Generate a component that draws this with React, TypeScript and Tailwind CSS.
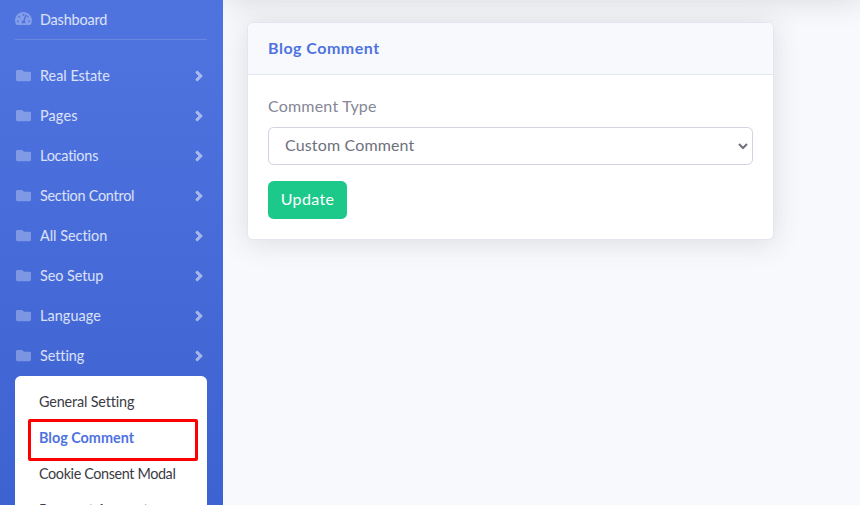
import { FaAngleRight, FaFolder, FaTachometerAlt } from "react-icons/fa";

const sections = [
  { label: "Real Estate", tracking: "tracking-[0px]" },
  { label: "Pages", tracking: "tracking-[0.15px]" },
  { label: "Locations", tracking: "tracking-[-0.2px]" },
  { label: "Section Control", tracking: "tracking-[-0.25px]" },
  { label: "All Section", tracking: "tracking-[0px]" },
  { label: "Seo Setup", tracking: "tracking-[-0.05px]" },
  { label: "Language", tracking: "tracking-[0.1px]" },
  { label: "Setting", tracking: "tracking-[-0.05px]" },
];

function Sidebar() {
  return (
    <aside className="h-full w-[223px] shrink-0 overflow-hidden bg-linear-to-b from-[#4e73df] from-10% to-[#3d62d1] pr-4 pl-[15px] text-[14.4px] text-white/80">
      <a className="flex h-[39px] items-center">
        <FaTachometerAlt className="mb-0.5 h-[15px] w-[17px] text-white/30" />
        <span className="ml-2 tracking-[-0.15px]">Dashboard</span>
      </a>
      <hr className="mb-4 border-white/15" />
      <nav>
        {sections.map((s) => (
          <a key={s.label} className="flex h-10 items-center">
            <span className="mb-px flex w-[17px] justify-center">
              <FaFolder className="size-[15px] text-white/30" />
            </span>
            <span className={`ml-2 ${s.tracking}`}>{s.label}</span>
            <FaAngleRight className="ml-auto size-4 stroke-white/50 stroke-[18px] text-white/50" />
          </a>
        ))}
      </nav>
      <div className="h-[180px] rounded-[5.6px] bg-white px-2 pt-2 text-[#3a3b45]">
        <a className="flex h-9 items-center px-4 tracking-[-0.16px]">General Setting</a>
        <a className="relative flex h-9 items-center px-4 font-bold text-[#4e73df]">
          Blog Comment
          <span className="absolute -top-px left-[5px] h-[42px] w-[170px] rounded-xs border-3 border-[#fe0000]" />
        </a>
        <a className="flex h-9 items-center px-4 tracking-[-0.38px]">Cookie Consent Modal</a>
        <a className="flex h-9 items-center px-4 tracking-[-0.1px]">Payment Account</a>
      </div>
    </aside>
  );
}

export default function App() {
  return (
    <div className="flex h-[505px] w-[860px] overflow-hidden bg-[#f8f9fc] font-['Lato','Noto_Sans',sans-serif] [font-variant-ligatures:none]">
      <Sidebar />
      <main className="flex-1 overflow-hidden px-6">
        <div className="-mx-6 -mt-[70px] h-[70px] shadow-[0_2.4px_28px_0_rgba(58,59,69,0.15)]" />
        <section className="mt-[22px] h-[218px] w-[527px] rounded-[5.6px] border border-[#e3e6f0] bg-white shadow-[0_2.4px_28px_0_rgba(58,59,69,0.15)]">
          <header className="flex h-[52px] items-center rounded-t-[5px] border-b border-[#e3e6f0] bg-[#f8f9fc] px-5">
            <h6 className="mb-0.5 text-base font-bold tracking-[0.5px] text-[#4e73df]">Blog Comment</h6>
          </header>
          <div className="px-5 pt-[19px]">
            <label className="block h-[33px] text-base leading-6 tracking-[0.2px] text-[#858796]">Comment Type</label>
            <div className="flex h-[38px] items-center rounded-[5.6px] border border-[#d1d3e2] pr-1 pl-4 text-base tracking-[0.15px] text-[#6e707e]">
              <span className="mb-0.5">Custom Comment</span>
              <svg className="ml-auto" width="10" height="8" viewBox="0 0 10 8" fill="none" stroke="#6e707e" strokeWidth="2">
                <path d="M1 2 5 6 9 2" />
              </svg>
            </div>
            <button className="mt-4 h-[38px] w-[79px] rounded-[5.6px] bg-[#1cc88a] pb-0.5 text-base tracking-[0.35px] text-white">Update</button>
          </div>
        </section>
      </main>
    </div>
  );
}
